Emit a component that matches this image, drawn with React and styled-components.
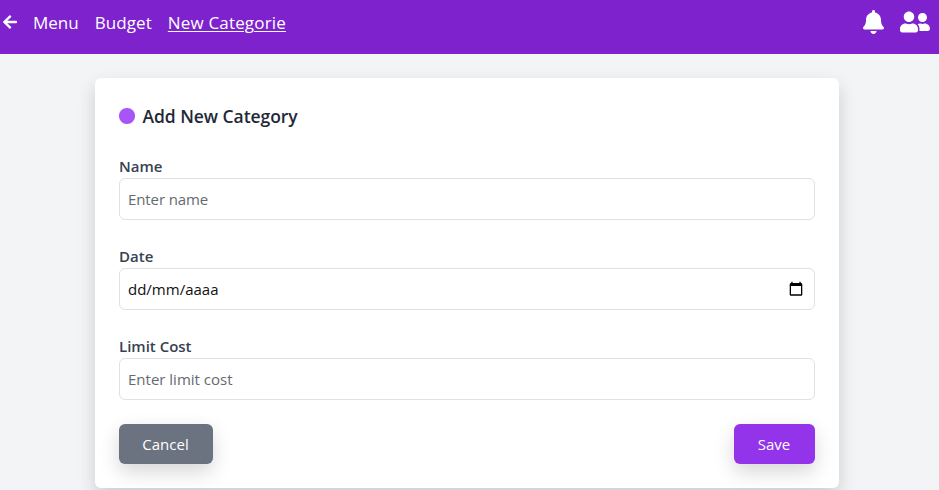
import React from "react";
import styled, { createGlobalStyle } from "styled-components";
import { FaArrowLeft, FaBell, FaUserFriends } from "react-icons/fa";

const Global = createGlobalStyle`
  *, *::before, *::after { box-sizing: border-box; }
  html { background: #f3f4f6; overflow: hidden; }
  body { margin: 0; height: 490px; overflow: hidden; }
  body, input, button { font-family: "Segoe UI", "Open Sans", "Noto Sans", sans-serif; }
`;

const Page = styled.div`
  display: flow-root;
  min-height: 100vh;
  background: #f3f4f6;
  color: #1f2937;
`;

const NavBar = styled.header`
  display: flex;
  justify-content: space-between;
  height: 54px;
  padding: 8px 9px 0 2px;
  background: #7e22ce;
  color: #fff;
`;

const NavLinks = styled.nav`
  display: flex;
  align-items: center;
  height: 28px;
  gap: 16px;
`;

const NavLink = styled.a`
  padding-top: 1px;
  font-size: 17px;
  line-height: 28px;
  letter-spacing: ${(p) => p.$tracking || "0"};
  white-space: nowrap;
  text-decoration: ${(p) => (p.$active ? "underline" : "none")};
  text-decoration-thickness: 1px;
  text-underline-offset: 2px;
`;

const BackIcon = styled(FaArrowLeft)`
  width: 16px;
  height: 16px;
  margin-right: -1px;
`;

const NavActions = styled.div`
  display: flex;
  gap: 16px;
  padding-top: 2px;
`;

const BellIcon = styled(FaBell)`
  width: 21px;
  height: 24px;
`;

const UsersIcon = styled(FaUserFriends)`
  width: 30px;
  height: 24px;
`;

const Card = styled.form`
  width: 744px;
  height: 410px;
  margin: 24px 0 0 95px;
  padding: 24px;
  border-radius: 6px;
  background: #fff;
  box-shadow: 0 8px 18px rgba(0, 0, 0, 0.16);
`;

const Title = styled.h1`
  display: flex;
  align-items: center;
  gap: 8px;
  height: 28px;
  margin: 0 0 24px;
  font-size: 17.5px;
  line-height: 28px;
  font-weight: 600;
  letter-spacing: -0.06px;
`;

const Dot = styled.span`
  width: 15.5px;
  height: 15.5px;
  border-radius: 50%;
  background: #a855f7;
`;

const Field = styled.label`
  display: block;
  height: 66px;
  margin-bottom: 24px;
`;

const LabelText = styled.span`
  display: block;
  height: 24px;
  color: #374151;
  font-size: 15px;
  line-height: 24px;
  font-weight: 600;
`;

const InputBox = styled.span`
  display: flex;
  align-items: center;
  justify-content: space-between;
  height: 42px;
  padding: 0 10px 0 8px;
  border: 1px solid #e0e1e6;
  border-radius: 6px;
`;

const Input = styled.input`
  flex: 1;
  min-width: 0;
  height: 24px;
  padding: 0;
  border: 0;
  outline: 0;
  background: transparent;
  font-size: 15px;
  line-height: 24px;
  letter-spacing: ${(p) => p.$tracking || "0"};
  &::placeholder {
    color: ${(p) => (p.$dark ? "#111" : "#666a70")};
    opacity: 1;
  }
`;

const CalendarIcon = styled.svg`
  width: 16px;
  height: 16px;
`;

const Actions = styled.div`
  display: flex;
  justify-content: space-between;
`;

const Button = styled.button`
  width: ${(p) => p.$width};
  height: 40px;
  padding: 0 1px 0 0;
  border: 0;
  border-radius: 6px;
  background: ${(p) => p.$color};
  color: #fff;
  font-size: 15px;
  box-shadow: 0 8px 20px rgba(0, 0, 0, 0.16);
`;

export default function App() {
  return (
    <Page>
      <Global />
      <NavBar>
        <NavLinks>
          <BackIcon />
          <NavLink>Menu</NavLink>
          <NavLink $tracking="0.08px">Budget</NavLink>
          <NavLink $active $tracking="0.17px">New Categorie</NavLink>
        </NavLinks>
        <NavActions>
          <BellIcon />
          <UsersIcon />
        </NavActions>
      </NavBar>
      <Card>
        <Title>
          <Dot />
          Add New Category
        </Title>
        <Field>
          <LabelText>Name</LabelText>
          <InputBox>
            <Input $tracking="-0.1px" placeholder="Enter name" />
          </InputBox>
        </Field>
        <Field>
          <LabelText>Date</LabelText>
          <InputBox>
            <Input $dark placeholder="dd/mm/aaaa" />
            <CalendarIcon viewBox="0 0 16 16">
              <path
                d="M3.300 .7h1.300v1.300h6.800V.7h1.300v1.300q1.600 0 1.600 1.200v10.200q0 1.300-1.300 1.300H3q-1.300 0-1.300-1.300V3.200q0-1.200 1.600-1.200zM3 5v8.300h10V5z"
                fillRule="evenodd"
              />
            </CalendarIcon>
          </InputBox>
        </Field>
        <Field>
          <LabelText>Limit Cost</LabelText>
          <InputBox>
            <Input placeholder="Enter limit cost" />
          </InputBox>
        </Field>
        <Actions>
          <Button type="button" $width="94px" $color="#6b7280">Cancel</Button>
          <Button type="button" $width="81px" $color="#9333ea">Save</Button>
        </Actions>
      </Card>
    </Page>
  );
}
